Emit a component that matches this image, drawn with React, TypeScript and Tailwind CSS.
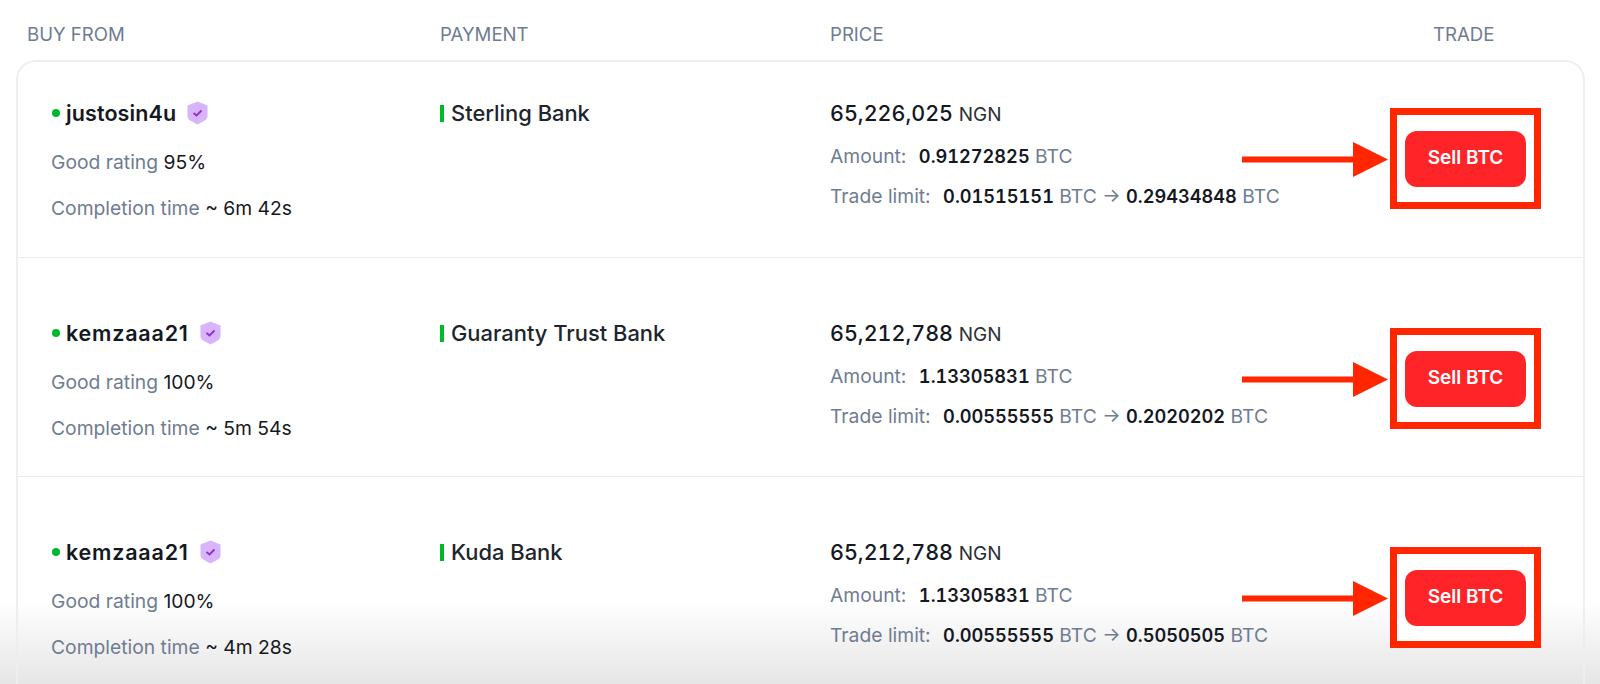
const rows = [
  {
    name: 'justosin4u',
    nameClass: 'tracking-[0.1px]',
    rating: '95%',
    time: '~ 6m 42s',
    bank: 'Sterling Bank',
    price: '65,226,025',
    amount: '0.91272825',
    min: '0.01515151',
    max: '0.29434848',
    first: true,
  },
  {
    name: 'kemzaaa21',
    nameClass: 'tracking-[0.8px]',
    rating: '100%',
    time: '~ 5m 54s',
    bank: 'Guaranty Trust Bank',
    price: '65,212,788',
    amount: '1.13305831',
    min: '0.00555555',
    max: '0.2020202',
    first: false,
  },
  {
    name: 'kemzaaa21',
    nameClass: 'tracking-[0.8px]',
    rating: '100%',
    time: '~ 4m 28s',
    bank: 'Kuda Bank',
    price: '65,212,788',
    amount: '1.13305831',
    min: '0.00555555',
    max: '0.5050505',
    first: false,
  },
];

function Shield() {
  return (
    <svg width="21" height="24" viewBox="0 0 21 24" className="ml-[11px] shrink-0">
      <path d="M10.5 0.5 L20.5 4.5 V15 Q20.5 18 17 20 L10.5 23.5 L4 20 Q0.5 18 0.5 15 V4.5 Z" fill="#d8b4fa" />
      <path d="M6.5 12 L9.5 14.5 L14.5 9.5" fill="none" stroke="#8b2fd6" strokeWidth="1.8" />
    </svg>
  );
}

function Row({ row }: { row: (typeof rows)[number] }) {
  return (
    <div
      className={`flex border-b border-[#e9ebee] last:border-b-0 pl-[33px] pr-[42px] ${
        row.first ? 'h-[196px] pt-[36px]' : 'h-[219px] pt-[60px]'
      }`}
    >
      <div className="w-[389px]">
        <div className="flex h-[30px] items-center">
          <span className="ml-[1px] mr-[6px] h-[8px] w-[8px] rounded-full bg-[#00b82c]" />
          <span className={`text-[21.5px] font-semibold text-[#14181f] ${row.nameClass}`}>{row.name}</span>
          <Shield />
        </div>
        <div className="mt-[19px] h-[30px] leading-[30px] text-[#6f7c91]">
          Good rating <span className="text-[#14181f]">{row.rating}</span>
        </div>
        <div className="mt-[16px] h-[30px] leading-[30px] text-[#6f7c91]">
          Completion time <span className="text-[#14181f]">{row.time}</span>
        </div>
      </div>
      <div className="w-[390px]">
        <div className="flex h-[30px] items-center text-[21.9px] font-medium text-[#20252c]">
          <span className="mr-[7px] h-[17px] w-[4px] bg-[#00b82c]" />
          {row.bank}
        </div>
      </div>
      <div className="flex-1">
        <div className="h-[30px] text-[21.5px] font-medium leading-[30px] text-[#14181f] tabular-nums">
          {row.price} <span className="text-[19px] font-normal text-[#2a2f38]">NGN</span>
        </div>
        <div className="mt-[13px] h-[30px] leading-[30px] text-[#6f7c91]">
          Amount:{' '}
          <span className="ml-[7px] text-[18.2px] font-semibold text-[#14181f] tabular-nums">{row.amount}</span> BTC
        </div>
        <div className="mt-[10px] h-[30px] leading-[30px] text-[#6f7c91]">
          Trade limit:{' '}
          <span className="ml-[7px] text-[18.2px] font-semibold text-[#14181f] tabular-nums">{row.min}</span> BTC →{' '}
          <span className="text-[18.2px] font-semibold text-[#14181f] tabular-nums">{row.max}</span> BTC
        </div>
      </div>
      <div className="relative mt-[10px] h-[101px]">
        <div className="flex h-[101px] w-[151px] items-center justify-center border-[7px] border-[#ff2600] bg-white">
          <button className="h-[56px] w-[121px] rounded-[12px] bg-[#ff2427] text-[19px] font-semibold text-white">
            Sell BTC
          </button>
        </div>
        <svg width="146" height="35" viewBox="0 0 146 35" className="absolute left-[-148px] top-[34px]">
          <path d="M0 14.5 H111 V0 L146 17.5 L111 35 V20.5 H0 Z" fill="#ff2600" />
        </svg>
      </div>
    </div>
  );
}

export default function App() {
  return (
    <div className="relative h-[684px] overflow-hidden bg-white font-['Inter',sans-serif] text-[19.3px]">
      <div className="absolute inset-x-0 bottom-0 h-[84px] bg-gradient-to-b from-white to-[#e6e6e6]" />
      <div className="relative">
        <div className="flex h-[60px] items-start pt-[21px] text-[18.6px] leading-[26px] text-[#6f7c91]">
          <div className="w-[440px] pl-[27px]">BUY FROM</div>
          <div className="w-[390px]">PAYMENT</div>
          <div className="w-[603px]">PRICE</div>
          <div>TRADE</div>
        </div>
        <div className="ml-[16px] mr-[15px] rounded-t-[20px] border-2 border-b-0 border-[#eceef1]">
          {rows.map((row, i) => (
            <Row key={i} row={row} />
          ))}
        </div>
      </div>
    </div>
  );
}
